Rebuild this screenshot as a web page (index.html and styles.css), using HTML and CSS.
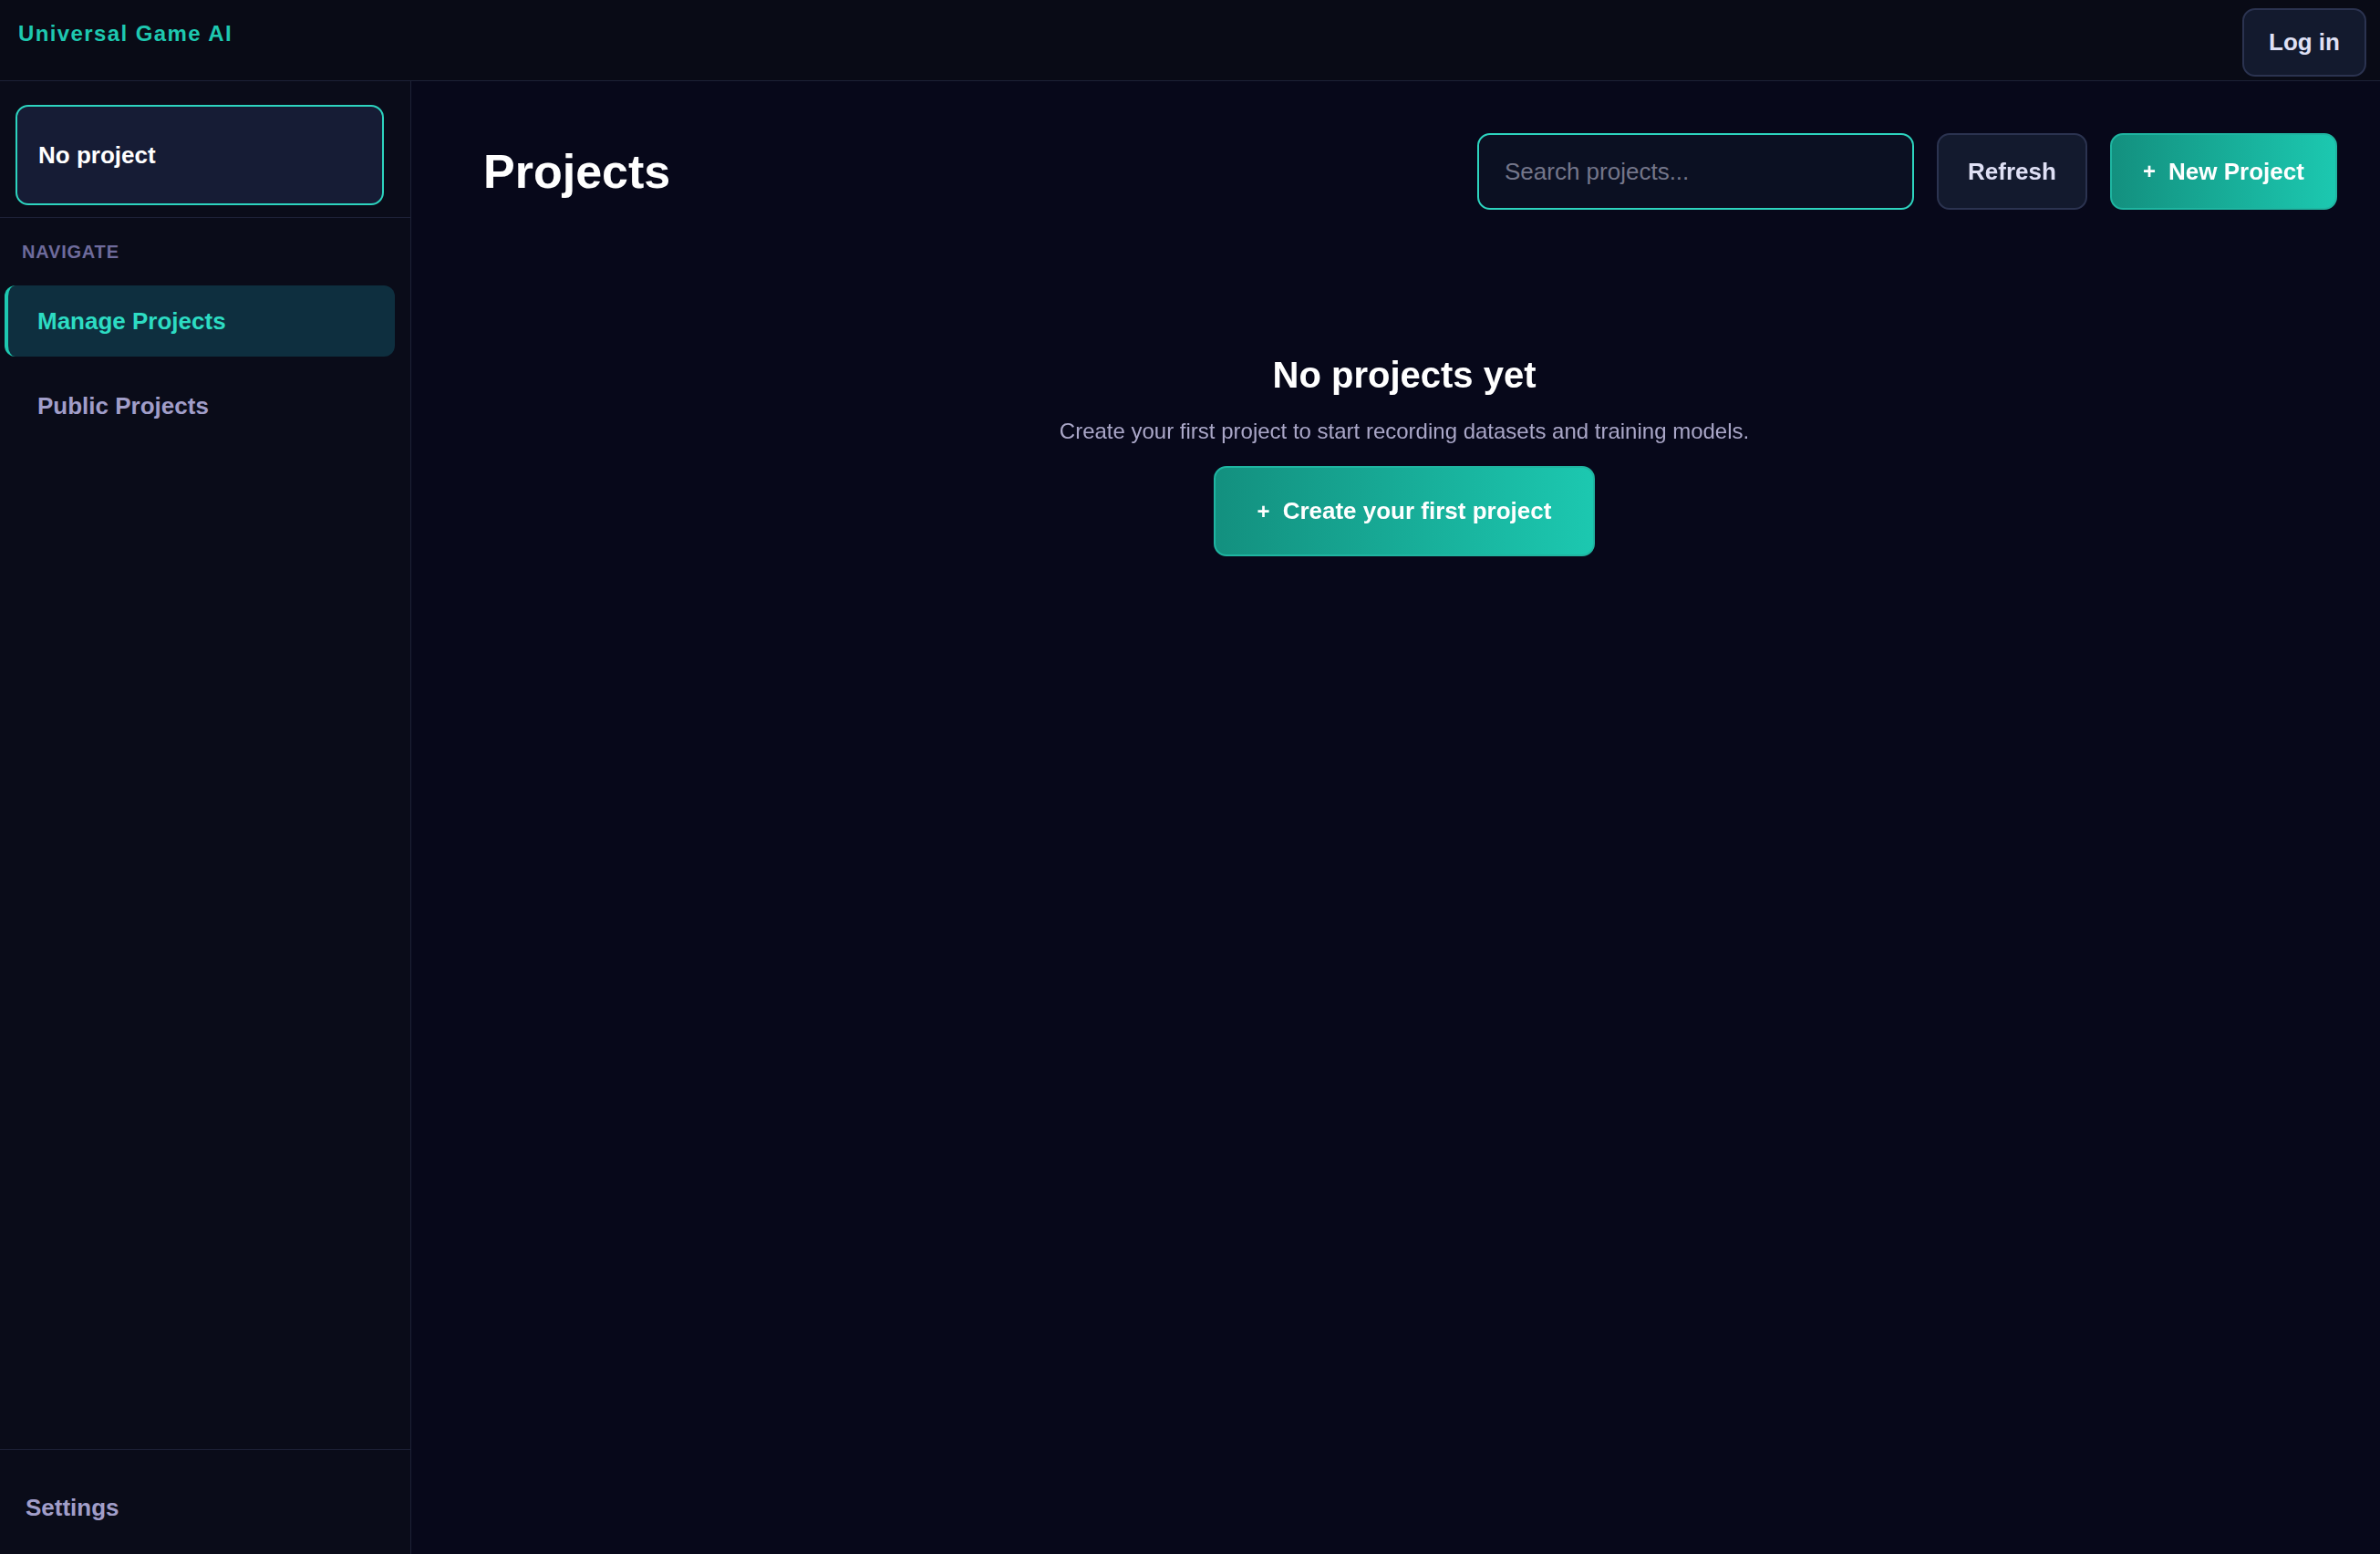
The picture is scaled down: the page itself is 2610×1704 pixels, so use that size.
FILE: index.html
```html
<!DOCTYPE html>
<html lang="en">
<head>
    <meta charset="UTF-8">
    <meta name="viewport" content="width=device-width, initial-scale=1.0">
    <title>Universal Game AI - Projects</title>
    <link rel="stylesheet" href="styles.css">
</head>
<body>
<header class="topbar">
    <div class="brand">Universal Game AI</div>
    <button class="btn btn-dark login">Log in</button>
</header>

<div class="layout">
    <aside class="sidebar">
        <div class="sidebar-top">
            <div class="project-picker">No project</div>
        </div>
        <nav class="sidebar-nav">
            <div class="nav-label">NAVIGATE</div>
            <a class="nav-item active" href="#">Manage Projects</a>
            <a class="nav-item" href="#">Public Projects</a>
        </nav>
        <div class="sidebar-bottom">
            <a class="nav-settings" href="#">Settings</a>
        </div>
    </aside>

    <main class="main">
        <div class="page-head">
            <h1>Projects</h1>
            <div class="actions">
                <input class="search" type="text" placeholder="Search projects..." autofocus>
                <button class="btn btn-dark refresh">Refresh</button>
                <button class="btn btn-primary new-project"><span class="plus">+</span>New Project</button>
            </div>
        </div>

        <!-- empty state -->
        <div class="empty">
            <h2>No projects yet</h2>
            <p>Create your first project to start recording datasets and training models.</p>
            <button class="btn btn-primary create-first"><span class="plus">+</span>Create your first project</button>
        </div>
    </main>
</div>
</body>
</html>
```

FILE: styles.css
```css
* {
    box-sizing: border-box;
}
body {
    font-family: "Liberation Sans", Arial, sans-serif;
    margin: 0;
    padding: 0;
    background-color: #07081a;
    color: #ffffff;
    height: 100vh;
    display: flex;
    flex-direction: column;
    overflow: hidden;
}
.topbar {
    height: 89px;
    background: #090b16;
    border-bottom: 1px solid #1d2137;
    display: flex;
    justify-content: space-between;
    align-items: flex-start;
    padding: 8px 15px 0 20px;
    flex-shrink: 0;
}
.brand {
    margin-top: 15px;
    color: #1ec8b0;
    font-size: 24px;
    font-weight: bold;
    letter-spacing: 1.4px;
}
.btn {
    font-family: inherit;
    font-size: 26px;
    font-weight: bold;
    border-radius: 14px;
    cursor: pointer;
}
.btn-dark {
    background: #131a2e;
    border: 2px solid #2b3350;
    color: #dfe0f5;
}
.btn-primary {
    background: linear-gradient(90deg, #13907f, #1cc8b0);
    border: 2px solid #1fb5a1;
    color: #ffffff;
    display: flex;
    align-items: center;
    justify-content: center;
}
.plus {
    font-size: 24px;
    margin-right: 14px;
}
.login {
    width: 136px;
    height: 75px;
    padding: 0;
    margin-top: 1px;
}
.layout {
    flex: 1;
    display: flex;
    min-height: 0;
}
.sidebar {
    width: 451px;
    background: #0a0c19;
    border-right: 1px solid #1d2137;
    display: flex;
    flex-direction: column;
    flex-shrink: 0;
}
.sidebar-top {
    padding: 26px 29px 13px 17px;
    border-bottom: 1px solid #1d2137;
}
.project-picker {
    height: 110px;
    border: 2px solid #2dd4bf;
    border-radius: 14px;
    background: #161c35;
    display: flex;
    align-items: center;
    padding-left: 23px;
    font-size: 26px;
    font-weight: bold;
    color: #ffffff;
}
.sidebar-nav {
    flex: 1;
    padding: 26px 17px 0 5px;
    display: flex;
    flex-direction: column;
    gap: 15px;
}
.nav-label {
    padding-left: 19px;
    font-size: 20px;
    font-weight: bold;
    letter-spacing: 0.8px;
    color: #6e6b9c;
    margin-bottom: 10px;
}
.nav-item {
    height: 78px;
    display: flex;
    align-items: center;
    padding-left: 36px;
    border-radius: 12px;
    font-size: 26px;
    font-weight: bold;
    color: #a19ec9;
    text-decoration: none;
}
.nav-item.active {
    background: #0e2f3f;
    border-left: 4px solid #1ec8b0;
    padding-left: 32px;
    color: #2ddcc3;
}
.sidebar-bottom {
    height: 115px;
    border-top: 1px solid #1d2137;
    padding: 48px 28px 0 28px;
}
.nav-settings {
    font-size: 26px;
    font-weight: bold;
    color: #a19ec9;
    text-decoration: none;
}
.main {
    flex: 1;
    padding: 57px 47px 0 79px;
}
.page-head {
    display: flex;
    justify-content: space-between;
    align-items: center;
}
h1 {
    margin: 0;
    font-size: 52px;
    font-weight: bold;
    color: #ffffff;
}
.actions {
    display: flex;
    gap: 25px;
}
.search {
    width: 479px;
    height: 84px;
    background: #0b1022;
    border: 2px solid #2dd4bf;
    border-radius: 14px;
    padding: 0 28px;
    font-family: inherit;
    font-size: 26px;
    color: #ffffff;
    outline: none;
    caret-color: #ffffff;
}
.search::placeholder {
    color: #74768a;
}
.refresh {
    width: 165px;
    height: 84px;
}
.new-project {
    width: 249px;
    height: 84px;
}
.empty {
    margin-top: 159px;
    padding-right: 13px;
    display: flex;
    flex-direction: column;
    align-items: center;
    text-align: center;
}
.empty h2 {
    margin: 0;
    font-size: 40px;
    font-weight: bold;
}
.empty p {
    margin: 25px 0 24px;
    font-size: 24px;
    color: #aaa7c8;
}
.create-first {
    width: 418px;
    height: 99px;
    border-radius: 14px;
}
```
